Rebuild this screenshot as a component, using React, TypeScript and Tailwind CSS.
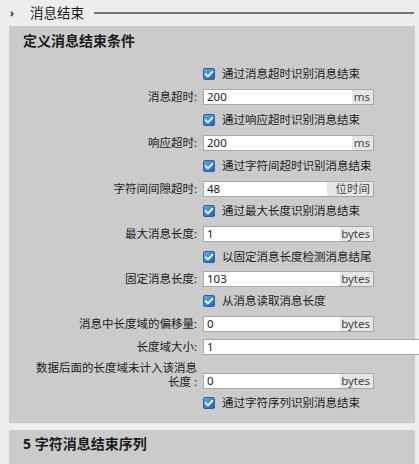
import React from 'react'

// Message-end settings panel (TIA-style property sheet)

const font = { fontFamily: '"Noto Sans", "Noto Sans CJK SC", sans-serif' }

function Check() {
  return (
    <svg width="12" height="12" viewBox="0 0 12 12" className="shrink-0">
      <defs>
        <linearGradient id="cbg" x1="0" y1="0" x2="1" y2="1">
          <stop offset="0" stopColor="#5fb0f0" />
          <stop offset="1" stopColor="#1a5fbf" />
        </linearGradient>
      </defs>
      <rect x="0.5" y="0.5" width="11" height="11" rx="1.5" fill="url(#cbg)" stroke="#2d5f9e" />
      <path d="M2.6 6.1 L5 8.4 L9.5 3.6" fill="none" stroke="#fff" strokeWidth="1.8" strokeLinecap="round" strokeLinejoin="round" />
    </svg>
  )
}

function CheckRow({ text, h }: { text: string; h: string }) {
  return (
    <div className={`flex items-center ${h}`}>
      <div className="w-[194px] shrink-0" />
      <Check />
      <span className="ml-[7px] whitespace-nowrap">{text}</span>
    </div>
  )
}

function Field({
  label,
  value,
  unit,
  unitW,
  h,
  wide,
}: {
  label: string
  value: string
  unit?: string
  unitW?: string
  h: string
  wide?: boolean
}) {
  return (
    <div className={`flex items-center ${h}`}>
      <div className="w-[188px] shrink-0 pl-[21px] text-right leading-[14px] whitespace-nowrap">{label}</div>
      <div
        className={`ml-[6px] flex h-[16px] shrink-0 border border-[#a8a8a8] bg-white ${wide ? 'w-[230px]' : 'w-[171px]'}`}
      >
        <div className="flex flex-1 items-center pl-[3px] leading-none">{value}</div>
        {unit && (
          <div className={`flex items-center justify-end bg-[#e6e6e6] pr-[3px] leading-none text-[#444] ${unitW}`}>
            {unit}
          </div>
        )}
      </div>
    </div>
  )
}

export default function App() {
  return (
    <div className="relative h-[464px] w-[419px] overflow-hidden bg-[#ededed] text-[11.5px] text-[#1c1c1c]" style={font}>
      {/* header */}
      <div className="flex h-[26px] items-center">
        <span className="ml-[10px] w-[20px] text-[11px] font-bold">›</span>
        <span className="text-[13.5px]">消息结束</span>
        <div className="ml-[10px] h-[2px] w-[320px] bg-[#747474]" />
      </div>

      {/* conditions panel */}
      <div className="ml-[9px] w-[406px] bg-[#cbcbcb] pb-[11px]">
        <div className="flex h-[28px] items-center pl-[14px] text-[14px] font-bold">定义消息结束条件</div>
        <div className="h-[8px]" />

        <CheckRow text="通过消息超时识别消息结束" h="h-[23px]" />
        <Field label="消息超时:" value="200" unit="ms" unitW="w-[21px]" h="h-[23px]" />
        <CheckRow text="通过响应超时识别消息结束" h="h-[23px]" />
        <Field label="响应超时:" value="200" unit="ms" unitW="w-[21px]" h="h-[23px]" />
        <CheckRow text="通过字符间超时识别消息结束" h="h-[23px]" />
        <Field label="字符间间隙超时:" value="48" unit="位时间" unitW="w-[46px]" h="h-[23px]" />
        <CheckRow text="通过最大长度识别消息结束" h="h-[22px]" />
        <Field label="最大消息长度:" value="1" unit="bytes" unitW="w-[33px]" h="h-[23px]" />
        <CheckRow text="以固定消息长度检测消息结尾" h="h-[23px]" />
        <Field label="固定消息长度:" value="103" unit="bytes" unitW="w-[33px]" h="h-[22px]" />
        <CheckRow text="从消息读取消息长度" h="h-[22px]" />
        <Field label="消息中长度域的偏移量:" value="0" unit="bytes" unitW="w-[33px]" h="h-[24px]" />
        <Field label="长度域大小:" value="1" h="h-[22px]" wide />

        <div className="flex h-[36px] items-end pb-[5px]">
          <div className="w-[188px] shrink-0 pl-[21px] text-right leading-[14px]">
            数据后面的长度域未计入该消息长度 :
          </div>
          <div className="ml-[6px] flex h-[16px] w-[171px] shrink-0 border border-[#a8a8a8] bg-white">
            <div className="flex flex-1 items-center pl-[3px] leading-none">0</div>
            <div className="flex w-[33px] items-center justify-end bg-[#e6e6e6] pr-[3px] leading-none text-[#444]">
              bytes
            </div>
          </div>
        </div>
        <CheckRow text="通过字符序列识别消息结束" h="h-[18px]" />
      </div>

      {/* next section */}
      <div className="ml-[9px] mt-[7px] h-[40px] w-[406px] bg-[#cbcbcb]">
        <div className="flex h-[24px] items-end pl-[14px] text-[14px] font-bold">5 字符消息结束序列</div>
      </div>
    </div>
  )
}
